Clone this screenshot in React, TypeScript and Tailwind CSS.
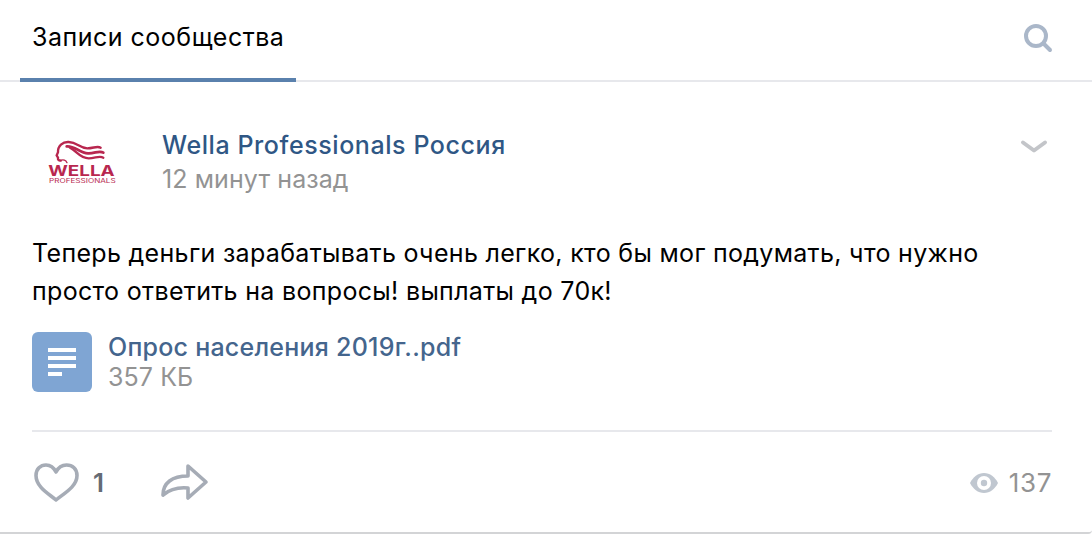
import React from 'react';

function WellaLogo() {
  return (
    <svg viewBox="0 0 330 240" className="h-[80px] w-[110px]" fill="none" stroke="#b8274f" strokeLinecap="round">
      <path d="M92 122 C85 122 83 118 84 113 L80 106 L84 97 C83 78 98 65 116 66 C142 67 148 84 172 85 C190 85 202 77 212 83" strokeWidth="7" />
      <path d="M110 79 C136 77 148 99 174 100 C194 101 208 90 220 98" strokeWidth="8" />
      <path d="M120 83 C140 93 150 115 176 115 C196 115 208 106 220 113" strokeWidth="7" />
      <path d="M90 122 C100 117 108 121 111 128" strokeWidth="4" />
      <text
        x="55"
        y="168"
        textLength="199"
        lengthAdjust="spacingAndGlyphs"
        className="font-['Inter'] text-[43px] font-bold"
        fill="#b8274f"
        stroke="none"
      >
        WELLA
      </text>
      <text
        x="57"
        y="188"
        textLength="200"
        lengthAdjust="spacingAndGlyphs"
        className="font-['Inter'] text-[18px]"
        fill="#b8274f"
        stroke="none"
      >
        PROFESSIONALS
      </text>
    </svg>
  );
}

export default function App() {
  return (
    <div className="flex h-[534px] w-[1092px] flex-col overflow-hidden rounded-br-[4px] border-b-2 border-[#d3d4d6] bg-white font-['Inter',sans-serif] text-[25px] text-black">
      {/* Tabs */}
      <div className="flex h-[82px] shrink-0 items-start justify-between border-b-2 border-[#e7e8ec] pl-5 pr-[38px]">
        <div className="h-[82px] w-[276px] border-b-4 border-[#5a81ad] pl-[12px] pt-[21px]">
          <span className="block whitespace-nowrap leading-8 tracking-[0.5px]">Записи сообщества</span>
        </div>
        <svg viewBox="0 0 32 32" className="mt-[22px] h-8 w-8" fill="none" stroke="#aab7c9" strokeWidth="4" strokeLinecap="round">
          <circle cx="14" cy="14" r="10" />
          <path d="M21.5 21.5 L28 28" />
        </svg>
      </div>

      {/* Post header */}
      <div className="flex h-[118px] shrink-0 items-start pl-[30px] pr-[44px] pt-[38px]">
        <WellaLogo />
        <div className="ml-[22px] mt-[9px] flex-1 whitespace-nowrap">
          <div className="font-medium leading-8 tracking-[0.58px] text-[#2f5785]">
            <span>Wella Professionals Россия</span>
          </div>
          <div className="mt-[2px] leading-8 tracking-[0.1px] text-[#939393]">
            <span>12 минут назад</span>
          </div>
        </div>
        <svg viewBox="0 0 32 20" className="mt-4 h-5 w-8" fill="none" stroke="#c3c5c9" strokeWidth="4" strokeLinecap="round" strokeLinejoin="round">
          <path d="M7 6.500 L18 14.500 L29 6.500" />
        </svg>
      </div>

      {/* Post text */}
      <div className="mt-[34px] px-8 leading-[38px] tracking-[0.32px]">
        <p className="whitespace-nowrap">Теперь деньги зарабатывать очень легко, кто бы мог подумать, что нужно</p>
        <p className="whitespace-nowrap">просто ответить на вопросы! выплаты до 70к!</p>
      </div>

      {/* Attached document */}
      <div className="mt-[22px] flex h-[60px] shrink-0 px-8">
        <div className="flex h-[60px] w-[60px] flex-col gap-1 rounded-[6px] bg-[#7fa5d3] pl-4 pt-4">
          <div className="h-1 w-7 bg-white" />
          <div className="h-1 w-7 bg-white" />
          <div className="h-1 w-7 bg-white" />
          <div className="h-1 w-[14px] bg-white" />
        </div>
        <div className="ml-4 whitespace-nowrap">
          <div className="font-medium leading-[30px] tracking-[0.24px] text-[#44658d]">
            <span>Опрос населения 2019г..pdf</span>
          </div>
          <div className="leading-[30px] tracking-[0.1px] text-[#939393]">
            <span>357 КБ</span>
          </div>
        </div>
      </div>

      {/* Actions */}
      <div className="ml-8 mr-10 mt-[38px] flex flex-1 items-start border-t-2 border-[#e7e8ec] pt-[28px]">
        <svg viewBox="0 0 48 44" className="h-11 w-12" fill="none" stroke="#a6acb6" strokeWidth="3.6" strokeLinejoin="round">
          <path d="M24 40 C17 34 4 27 4 15.5 C4 9 8.5 5 14 5 C18.5 5 22 8 24 12 C26 8 29.5 5 34.5 5 C40.5 5 45 9 45 15.5 C45 27 31 34 24 40 Z" />
        </svg>
        <span className="ml-[13px] mt-[7px] w-[14px] text-[26px] font-semibold leading-8 text-[#656b74]">1</span>
        <svg viewBox="0 0 52 44" className="ml-[50px] h-11 w-[52px]" fill="none" stroke="#a6acb6" strokeWidth="3.6" strokeLinejoin="round">
          <path d="M31 6 L49 22 L31 38 V28 C20 27 12 30 6 35 C6 23 15 16 31 16 Z" />
        </svg>
        <div className="ml-auto flex items-center pt-[6px]">
          <svg viewBox="0 0 28 20" className="mr-[11px] h-5 w-7">
            <path d="M0 10 C3 4 8 0 14 0 C20 0 25 4 28 10 C25 16 20 20 14 20 C8 20 3 16 0 10 Z" fill="#c0c7d0" />
            <circle cx="14" cy="10" r="7" fill="#fff" />
            <circle cx="14" cy="10" r="3.2" fill="#c0c7d0" />
          </svg>
          <span className="pt-px text-[26px] leading-8 tracking-[0.6px] text-[#939393]">137</span>
        </div>
      </div>
    </div>
  );
}
